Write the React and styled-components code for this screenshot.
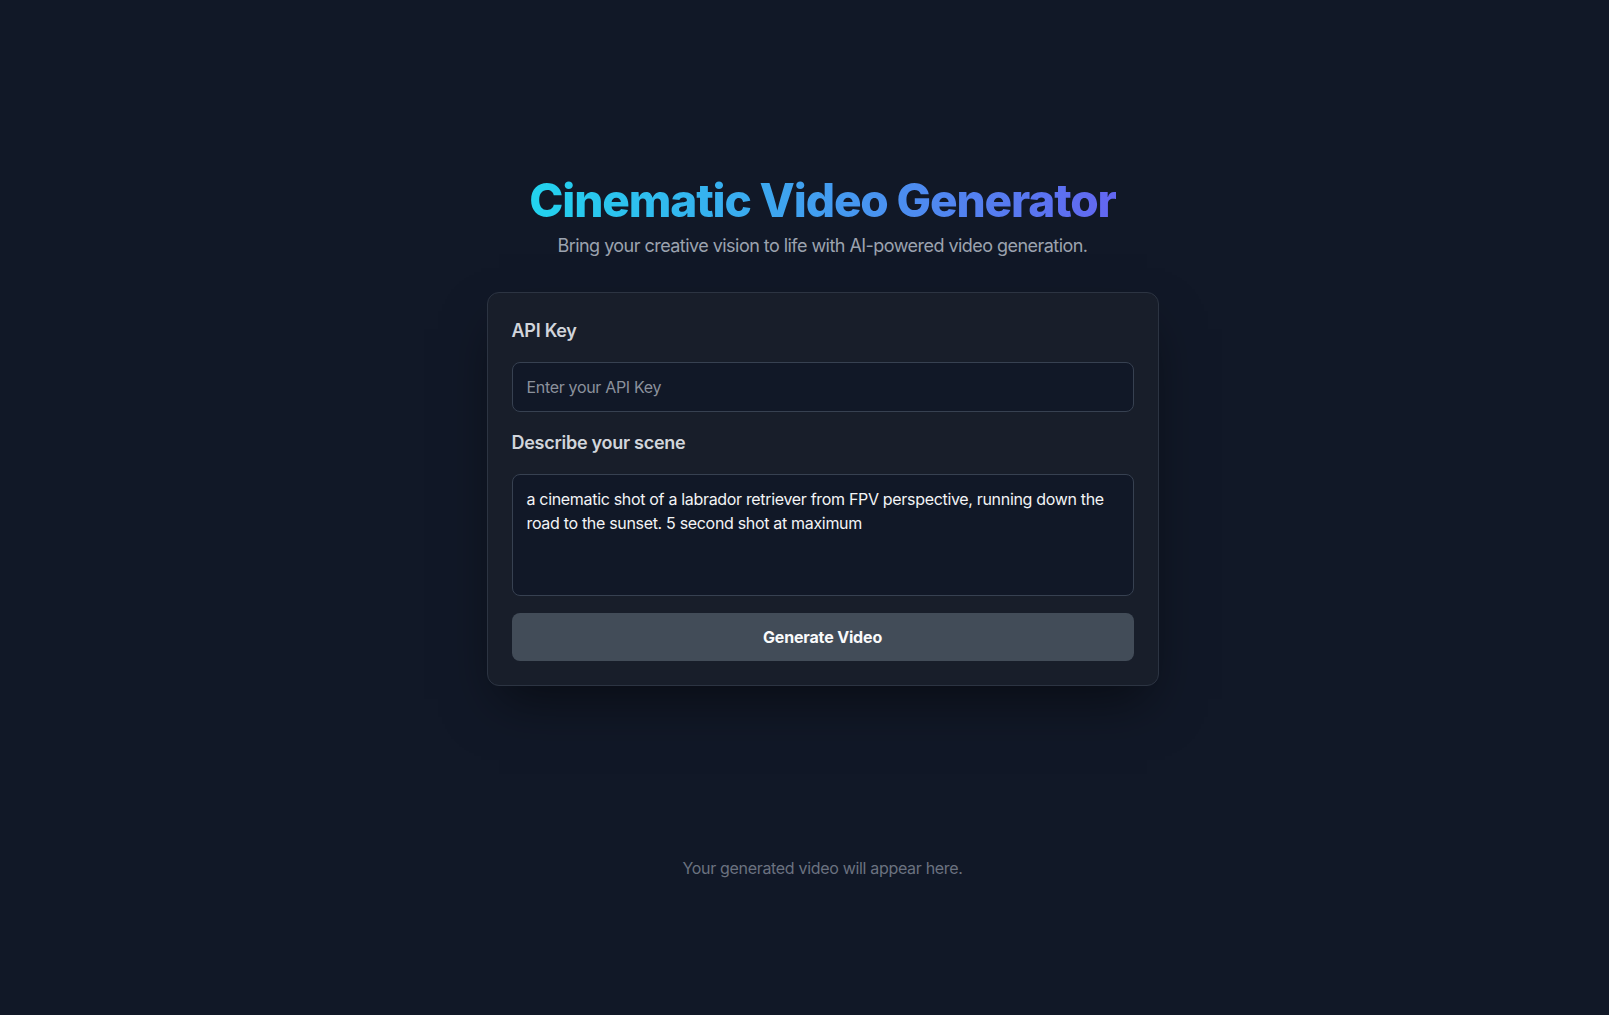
import React, { useState } from 'react';
import styled, { createGlobalStyle } from 'styled-components';

const Global = createGlobalStyle`
    html, body {
        margin: 0;
        padding: 0;
        background: #111827;
    }
    body {
        font-family: Inter, "Noto Sans", "Liberation Sans", sans-serif;
        color: #f3f4f6;
    }
`

function App() {

    const [apiKey, setApiKey] = useState('');
    const [prompt, setPrompt] = useState('a cinematic shot of a labrador retriever from FPV perspective, running down the road to the sunset. 5 second shot at maximum');

    return (
        <>
            <Global />
            <Page>
                <Header>
                    <Title>Cinematic Video Generator</Title>
                    <Subtitle>Bring your creative vision to life with AI-powered video generation.</Subtitle>
                </Header>

                <Card>
                    <Form onSubmit={(e) => e.preventDefault()}>
                        <Label htmlFor="api-key">API Key</Label>
                        <Input
                            id="api-key"
                            type="password"
                            placeholder="Enter your API Key"
                            value={apiKey}
                            onChange={(e) => setApiKey(e.target.value)}
                        />
                        <Label htmlFor="prompt">Describe your scene</Label>
                        <TextArea
                            id="prompt"
                            rows={4}
                            value={prompt}
                            onChange={(e) => setPrompt(e.target.value)}
                        />
                        <Button type="submit" disabled={!apiKey}>Generate Video</Button>
                    </Form>
                </Card>

                <Result>
                    <p>Your generated video will appear here.</p>
                </Result>
            </Page>
        </>
    )
}

const Page = styled.div`
    min-height: 100vh;
    box-sizing: border-box;
    display: flex;
    flex-direction: column;
    align-items: center;
    padding: 172px 0 0 36px;
`

const Header = styled.header`
    display: flex;
    flex-direction: column;
    align-items: center;
    margin-bottom: 32px;
`

const Title = styled.h1`
    margin: 0;
    font-size: 46px;
    line-height: 56px;
    font-weight: 800;
    letter-spacing: -0.025em;
    background: linear-gradient(to right, #22d3ee, #6366f1);
    -webkit-background-clip: text;
    background-clip: text;
    color: transparent;
`

const Subtitle = styled.p`
    margin: 4px 0 0;
    font-size: 18px;
    line-height: 28px;
    letter-spacing: -0.03em;
    color: #9ca3af;
`

const Card = styled.div`
    width: 672px;
    box-sizing: border-box;
    padding: 24px;
    background: #181e2a;
    border: 1px solid #2c3442;
    border-radius: 12px;
    box-shadow: 0 25px 50px -12px rgba(0, 0, 0, 0.5);
`

const Form = styled.form`
    display: flex;
    flex-direction: column;
    gap: 17px;
`

const Label = styled.label`
    font-size: 18px;
    line-height: 28px;
    font-weight: 600;
    letter-spacing: -0.015em;
    color: #d1d5db;
`

const fieldStyles = `
    width: 100%;
    box-sizing: border-box;
    padding: 12px 12px 12px 14px;
    background: #111827;
    border: 1px solid #374151;
    border-radius: 8px;
    font-family: Inter, "Noto Sans", "Liberation Sans", sans-serif;
    font-size: 16px;
    line-height: 24px;
    letter-spacing: -0.02em;
    color: #f3f4f6;
    outline: none;
    &::placeholder {
        color: #8b919c;
    }
    &:focus {
        border-color: #06b6d4;
    }
`

const Input = styled.input`
    ${fieldStyles}
    height: 50px;
`

const TextArea = styled.textarea`
    ${fieldStyles}
    height: 122px;
    resize: none;
    display: block;
`

const Button = styled.button`
    height: 48px;
    width: 100%;
    border: none;
    border-radius: 8px;
    background: #424c58;
    color: #f9fafb;
    font-family: Inter, "Noto Sans", "Liberation Sans", sans-serif;
    font-size: 16px;
    font-weight: 700;
    letter-spacing: -0.01em;
    cursor: pointer;
    &:disabled {
        cursor: not-allowed;
    }
`

const Result = styled.div`
    margin-top: 170px;
    p {
        margin: 0;
        font-size: 16px;
        line-height: 24px;
        letter-spacing: -0.02em;
        color: #6b7280;
    }
`

export default App;
